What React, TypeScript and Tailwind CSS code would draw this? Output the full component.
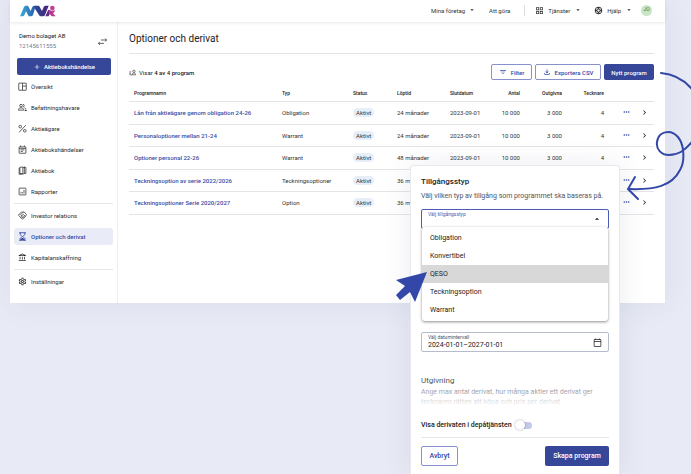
import React, { useState } from "react";
import {
  MdAdd,
  MdArrowDropDown,
  MdArrowDropUp,
  MdChevronRight,
  MdFilterList,
  MdOutlineAccountBalance,
  MdOutlineCalendarToday,
  MdOutlineFileDownload,
  MdOutlineGridView,
  MdOutlineSettings,
  MdSupport,
} from "react-icons/md";

type IconProps = { size?: number };

const DashboardIcon: React.FC<IconProps> = ({ size = 9 }) => (
  <svg width={size} height={size} viewBox="0 0 24 24" fill="none" stroke="currentColor" strokeWidth="2">
    <rect x="2" y="3" width="20" height="19" rx="1" />
    <path d="M12 3v19M12 11h10" />
  </svg>
);

const PeopleIcon: React.FC<IconProps> = ({ size = 9 }) => (
  <svg width={size} height={size} viewBox="0 0 24 24" fill="none" stroke="currentColor" strokeWidth="2">
    <circle cx="8" cy="7" r="3.5" />
    <path d="M1 19v-2c0-2 3-4 7-4s7 2 7 4v2zM13 3.500a3.500 3.500 0 0 1 0 7M17 13c3 1 4 2 4 4" />
    <path d="M18 20h5" strokeWidth="3" />
  </svg>
);

const PercentIcon: React.FC<IconProps> = ({ size = 9 }) => (
  <svg width={size} height={size} viewBox="0 0 24 24" fill="none" stroke="currentColor" strokeWidth="2">
    <circle cx="6" cy="7" r="3.500" />
    <circle cx="18" cy="18" r="3.500" />
    <path d="M21 3L3 22" />
  </svg>
);

const EventIcon: React.FC<IconProps> = ({ size = 9 }) => (
  <svg width={size} height={size} viewBox="0 0 24 24" fill="none" stroke="currentColor" strokeWidth="2">
    <rect x="3" y="5" width="18" height="17" rx="1" />
    <path d="M3 9h18M7 1v4M17 1v4M7 13h10M7 17h6" />
  </svg>
);

const BookIcon: React.FC<IconProps> = ({ size = 9 }) => (
  <svg width={size} height={size} viewBox="0 0 24 24" fill="none" stroke="currentColor" strokeWidth="2">
    <path d="M5 3h8v17H5zM13 5l4-3v18l-4 2M17 4h4v16h-4M3 5v17h9" />
  </svg>
);

const ReportIcon: React.FC<IconProps> = ({ size = 9 }) => (
  <svg width={size} height={size} viewBox="0 0 24 24" fill="none" stroke="currentColor" strokeWidth="2">
    <rect x="3" y="3" width="18" height="18" rx="1" />
    <path d="M8 17v-4M12 17v-3M16 17V8" />
  </svg>
);

const HandshakeIcon: React.FC<IconProps> = ({ size = 9 }) => (
  <svg width={size} height={size} viewBox="0 0 24 24" fill="none" stroke="currentColor" strokeWidth="2" strokeLinejoin="round">
    <path d="M1 11l9-9 3 2 3-2 7 8-11 12L1 11z" />
    <path d="M13 4L7 10l3 3 4-4 6 6M7 17l3-3M10 19l3-3M12 13l5 5" />
  </svg>
);

const HourglassIcon: React.FC<IconProps> = ({ size = 9 }) => (
  <svg width={size} height={size} viewBox="0 0 24 24" fill="none" stroke="currentColor" strokeWidth="2.4">
    <path d="M3 2h18M3 22h18M6 2v5l5 5-5 5v5M18 2v5l-5 5 5 5v5" />
    <path d="M8 21v-3l4-3 4 3v3z" fill="currentColor" stroke="none" />
  </svg>
);

const ListPeopleIcon: React.FC<IconProps> = ({ size = 7 }) => (
  <svg width={size} height={size} viewBox="0 0 24 24" fill="none" stroke="currentColor" strokeWidth="2">
    <path d="M1 10h7M1 15h6M1 20h22v-2c0-2-3-4-6-4s-6 2-6 4v2" />
    <circle cx="17" cy="8" r="4" />
  </svg>
);

const SwapIcon: React.FC<IconProps> = ({ size = 9 }) => (
  <svg width={size} height={size} viewBox="0 0 24 24" fill="none" stroke="currentColor" strokeWidth="2">
    <path d="M8 8h15M19 4l4 4-4 4M16 17H1M5 13l-4 4 4 4" />
  </svg>
);

const DotsIcon: React.FC<IconProps> = ({ size = 7 }) => (
  <svg width={size} height={size} viewBox="0 0 21 21" fill="currentColor">
    <circle cx="4" cy="9" r="2.500" />
    <circle cx="10.500" cy="9" r="2.500" />
    <circle cx="17" cy="9" r="2.500" />
  </svg>
);

const Logo = () => (
  <svg width="36" height="12" viewBox="0 0 108 36" aria-label="NVR">
    <defs>
      <linearGradient id="blue" x1="0" x2="1">
        <stop offset="0" stopColor="#3cabdc" />
        <stop offset="1" stopColor="#2a5caa" />
      </linearGradient>
      <linearGradient id="navy" x1="0" x2="1">
        <stop offset="0" stopColor="#2b4a9b" />
        <stop offset="1" stopColor="#4a2379" />
      </linearGradient>
    </defs>
    <path d="M0 34L12 6q2-4 6-4h6l8 16 5-12q2-4 6-4h4L39 30q-2 4-6 4h-7l-8-15-5 11q-2 4-5 4z" fill="url(#blue)" />
    <path d="M45 2h12l9 16 5-12q2-4 6-4h9L75 30q-2 4-6 4h-7q-3 0-5-4L43 8z" fill="url(#navy)" />
    <path d="M76 34l9-20 8 4-7 16z" fill="#5f2a83" />
    <path d="M87 15q10 5 18 0-1 7-6 10l8 9H95l-10-12z" fill="#b8398f" />
    <circle cx="97" cy="9" r="7" fill="#c0419a" />
  </svg>
);

const navGroups = [
  [
    { name: "Översikt", icon: DashboardIcon },
    { name: "Befattningshavare", icon: PeopleIcon },
    { name: "Aktieägare", icon: PercentIcon },
    { name: "Aktiebokshändelser", icon: EventIcon },
    { name: "Aktiebok", icon: BookIcon },
    { name: "Rapporter", icon: ReportIcon },
  ],
  [
    { name: "Investor relations", icon: HandshakeIcon },
    { name: "Optioner och derivat", icon: HourglassIcon },
    { name: "Kapitalanskaffning", icon: MdOutlineAccountBalance },
  ],
  [{ name: "Inställningar", icon: MdOutlineSettings }],
];

const programs = [
  { name: "Lån från aktieägare genom obligation 24-26", type: "Obligation", term: "24 månader" },
  { name: "Personaloptioner mellan 21-24", type: "Warrant", term: "24 månader" },
  { name: "Optioner personal 22-26", type: "Warrant", term: "48 månader" },
  { name: "Teckningsoption av serie 2022/2026", type: "Teckningsoptioner", term: "36 månader" },
  { name: "Teckningsoptioner Serie 2020/2027", type: "Option", term: "36 månader" },
];

const assetTypes = ["Obligation", "Konvertibel", "QESO", "Teckningsoption", "Warrant"];

const TopBar = () => (
  <header className="relative z-10 flex h-[22px] items-center bg-white pl-[10px] pr-[13px] text-[6px] text-[#333] shadow-[0_1px_3px_rgba(0,0,0,0.1)]">
    <Logo />
    <nav className="ml-auto flex h-full items-center pb-[2px]">
      <button className="flex items-center gap-[3px]">
        Mina företag <MdArrowDropDown size={8} />
      </button>
      <a href="#todo" className="ml-[13px]">Att göra</a>
      <span className="ml-[14px] mr-[10px] h-[11px] w-px bg-[#ddd]" />
      <button className="flex items-center gap-[4px]">
        <MdOutlineGridView size={9} /> Tjänster <MdArrowDropDown size={8} />
      </button>
      <button className="ml-[12px] flex items-center gap-[4px]">
        <MdSupport size={9} /> Hjälp <MdArrowDropDown size={8} />
      </button>
      <button className="ml-[8px] flex size-[11px] items-center justify-center rounded-full bg-[#c8e6c5] text-[5px] text-[#42724a]">
        JO
      </button>
    </nav>
  </header>
);

const Sidebar = ({ active }: { active: string }) => (
  <aside className="w-[108px] shrink-0 border-r border-[#eeeff2] px-[4px] pb-[13px] pt-[9px]">
    <div className="flex items-center justify-between px-[5px] leading-[10px]">
      <div className="text-[6px]">
        <div className="text-[#222]">Demo bolaget AB</div>
        <div className="text-[#717b94]">12145611555</div>
      </div>
      <button aria-label="Byt bolag" className="pr-px text-[#333]">
        <SwapIcon />
      </button>
    </div>
    <button className="mx-[3px] mt-[7px] flex h-[17px] w-[94px] items-center justify-center gap-[3px] rounded-[2px] bg-[#36479a] text-[6px] font-medium text-white">
      <MdAdd size={8} /> Aktiebokshändelse
    </button>
    <nav className="mt-[3px]">
      {navGroups.map((group, i) => (
        <ul key={i} className={`flex flex-col gap-[4px] ${i > 0 ? "mt-[3px] border-t border-[#e6e7ea] pt-[3px]" : ""}`}>
          {group.map(({ name, icon: Icon }) => (
            <li key={name}>
              <a
                href="#nav"
                className={`flex h-[17px] items-center gap-[4px] rounded-[3px] px-[4px] text-[6px] ${
                  name === active ? "bg-[#e9ecf6] font-medium text-[#3547a5]" : "text-[#2b2b2b]"
                }`}
              >
                <Icon size={9} /> {name}
              </a>
            </li>
          ))}
        </ul>
      ))}
    </nav>
  </aside>
);

const ProgramTable = () => (
  <table className="w-full table-fixed text-[6px] leading-[9px] text-[#333]">
    <colgroup>
      <col />
      <col className="w-[71px]" />
      <col className="w-[44px]" />
      <col className="w-[53px]" />
      <col className="w-[42px]" />
      <col className="w-[38px]" />
      <col className="w-[42px]" />
      <col className="w-[42px]" />
      <col className="w-[26px]" />
      <col className="w-[19px]" />
    </colgroup>
    <thead>
      <tr className="h-[21px] border-b border-[#e2e4e8] text-left text-[5px] text-[#222] *:whitespace-nowrap *:px-[5px] *:pt-[6px] *:font-medium">
        <th>Programnamn</th>
        <th>Typ</th>
        <th>Status</th>
        <th>Löptid</th>
        <th>Slutdatum</th>
        <th className="text-right">Antal</th>
        <th className="text-right">Outgivna</th>
        <th className="text-right">Tecknare</th>
        <th />
        <th />
      </tr>
    </thead>
    <tbody>
      {programs.map((program) => (
        <tr key={program.name} className="h-[23px] border-b border-[#e2e4e8] *:whitespace-nowrap *:px-[5px] even:h-[22px]">
          <td>
            <a href="#program" className="font-medium text-[#3a4ba3]">{program.name}</a>
          </td>
          <td>{program.type}</td>
          <td>
            <span className="rounded-full bg-[#e6eff7] px-[3px] py-px">Aktivt</span>
          </td>
          <td>{program.term}</td>
          <td>2023-09-01</td>
          <td className="text-right">10 000</td>
          <td className="text-right">3 000</td>
          <td className="text-right">4</td>
          <td>
            <button aria-label="Fler val" className="ml-auto block text-[#3a4ba3]">
              <DotsIcon />
            </button>
          </td>
          <td>
            <button aria-label="Öppna" className="block text-[#222]">
              <MdChevronRight size={9} />
            </button>
          </td>
        </tr>
      ))}
    </tbody>
  </table>
);

const AssetDialog = () => {
  const [assetType, setAssetType] = useState("QESO");

  return (
    <section
      role="dialog"
      aria-labelledby="dialog-title"
      className="absolute right-[71px] top-[165px] z-20 w-[210px] rounded-t-[3px] border border-[#e8e8ee] bg-white px-[10px] pb-[8px] pt-[10px] text-[7px] text-[#222] shadow-[0_0_28px_rgba(60,70,120,0.1)]"
    >
      <h2 id="dialog-title" className="text-[8px] font-medium leading-[12px]">Tillgångsstyp</h2>
      <p className="mt-[2px] whitespace-nowrap leading-[12px] text-[#4a5568]">
        Välj vilken typ av tillgång som programmet ska baseras på.
      </p>

      <div className="relative mt-[7px] h-[20px] rounded-[2px] border border-[#4c5cb5]">
        <label htmlFor="asset-type" className="absolute left-[6px] top-0 text-[5px] leading-[8px] text-[#4c5cb5]">
          Välj tillgångsstyp
        </label>
        <select id="asset-type" className="size-full appearance-none outline-none">
          <option value="" />
        </select>
        <MdArrowDropUp size={10} className="pointer-events-none absolute right-[6px] top-[4px]" />
        <ul
          role="listbox"
          aria-label="Tillgångsstyp"
          className="absolute inset-x-0 top-[17px] rounded-[3px] bg-white py-[2px] shadow-[0_1px_3px_rgba(0,0,0,0.45)]"
        >
          {assetTypes.map((type) => (
            <li
              key={type}
              role="option"
              aria-selected={type === assetType}
              onClick={() => setAssetType(type)}
              className={`flex h-[18px] items-center px-[8px] ${type === assetType ? "bg-[#d8d8d8]" : ""}`}
            >
              {type}
            </li>
          ))}
        </ul>
      </div>

      <div className="relative mt-[103px] h-[20px] rounded-[2px] border border-[#b6bccd]">
        <label htmlFor="interval" className="absolute left-[6px] top-0 text-[5px] leading-[8px] text-[#4a5568]">
          Välj datumintervall
        </label>
        <input
          id="interval"
          defaultValue="2024-01-01–2027-01-01"
          className="size-full px-[6px] pt-[6px] outline-none"
        />
        <MdOutlineCalendarToday size={9} className="absolute right-[6px] top-[5px]" />
      </div>

      <div className="relative mt-[23px]">
        <h3 className="text-[8px] leading-[12px] text-[#555]">Utgivning</h3>
        <p className="h-[20px] overflow-hidden leading-[10px] text-[#9a9ea8]">
          Ange max antal derivat, hur många aktier ett derivat ger tecknaren rätten att köpa och pris per derivat.
        </p>
        <div className="absolute inset-x-0 bottom-0 h-[16px] bg-linear-to-b from-transparent to-white" />
      </div>

      <label className="mt-[12px] flex h-[12px] items-center gap-[3px] font-medium">
        Visa derivaten i depåtjänsten
        <input type="checkbox" role="switch" className="peer sr-only" />
        <span className="flex h-[7px] w-[17px] items-center rounded-full bg-linear-to-r from-white from-40% to-[#c3c9e8] to-40%">
          <span className="size-[10px] shrink-0 rounded-full bg-white shadow-[0_0_2px_rgba(0,0,0,0.4)]" />
        </span>
      </label>

      <div className="mt-[6px] flex justify-between border-t border-[#e6e7ec] pt-[8px] font-medium">
        <button className="h-[20px] w-[37px] rounded-[2px] border border-[#8791cb] text-[#3547a5]">Avbryt</button>
        <button className="h-[20px] w-[64px] rounded-[2px] bg-[#36479a] text-white">Skapa program</button>
      </div>
    </section>
  );
};

const App: React.FC = () => (
  <div className="relative min-h-screen overflow-hidden bg-[#e8ebf5] font-['Roboto',sans-serif]">
    <div className="ml-[10px] mr-[26px] bg-white shadow-[0_0_30px_rgba(60,70,120,0.08)]">
      <TopBar />
      <div className="flex">
        <Sidebar active="Optioner och derivat" />
        <main className="min-w-0 flex-1 px-[11px]">
          <h1 className="border-b border-[#e2e4e8] pb-[7px] pt-[10px] text-[10px] leading-[14px] text-[#222]">
            Optioner och derivat
          </h1>
          <div className="mt-[10px] flex h-[16px] items-center gap-[3px] text-[6px] text-[#222]">
            <ListPeopleIcon />
            <span>
              Visar <b className="font-medium">4 av 4 program</b>
            </span>
            <button className="ml-auto flex h-[16px] w-[41px] items-center justify-center gap-[4px] rounded-[2px] border border-[#8791cb] font-medium text-[#3547a5]">
              <MdFilterList size={8} /> Filter
            </button>
            <button className="flex h-[16px] w-[66px] items-center justify-center gap-[4px] whitespace-nowrap rounded-[2px] border border-[#8791cb] font-medium text-[#3547a5]">
              <MdOutlineFileDownload size={8} /> Exportera CSV
            </button>
            <button className="h-[16px] w-[50px] whitespace-nowrap rounded-[2px] bg-[#36479a] font-medium text-white">
              Nytt program
            </button>
          </div>
          <ProgramTable />
        </main>
      </div>
    </div>

    <AssetDialog />

    {/* Hand-drawn arrow from "Nytt program" to the dialog */}
    <svg
      className="pointer-events-none absolute right-0 top-[60px] z-30"
      width="80"
      height="150"
      viewBox="611 60 80 150"
      fill="none"
      stroke="#3347a8"
      strokeWidth="2"
      strokeLinecap="round"
    >
      <path d="M661 73C672 74 683 79 691 88C706 105 704 130 691 143C684 151 678 155 669 155C661 155 656 149 657 142C658 135 663 132 668 132C676 132 682 140 683 150C684 158 683 165 680 170C672 186 655 190 629 189" />
      <path d="M635 177L628 189L638 199" />
    </svg>

    {/* Mouse pointer */}
    <svg
      className="pointer-events-none absolute right-[264px] top-[272px] z-30"
      width="31"
      height="30"
      viewBox="0 0 31 30"
      fill="#3347a8"
    >
      <path d="M31 0L0 8L9 14L0 23L4 28L14 20L19 30z" />
    </svg>
  </div>
);

export default App;
